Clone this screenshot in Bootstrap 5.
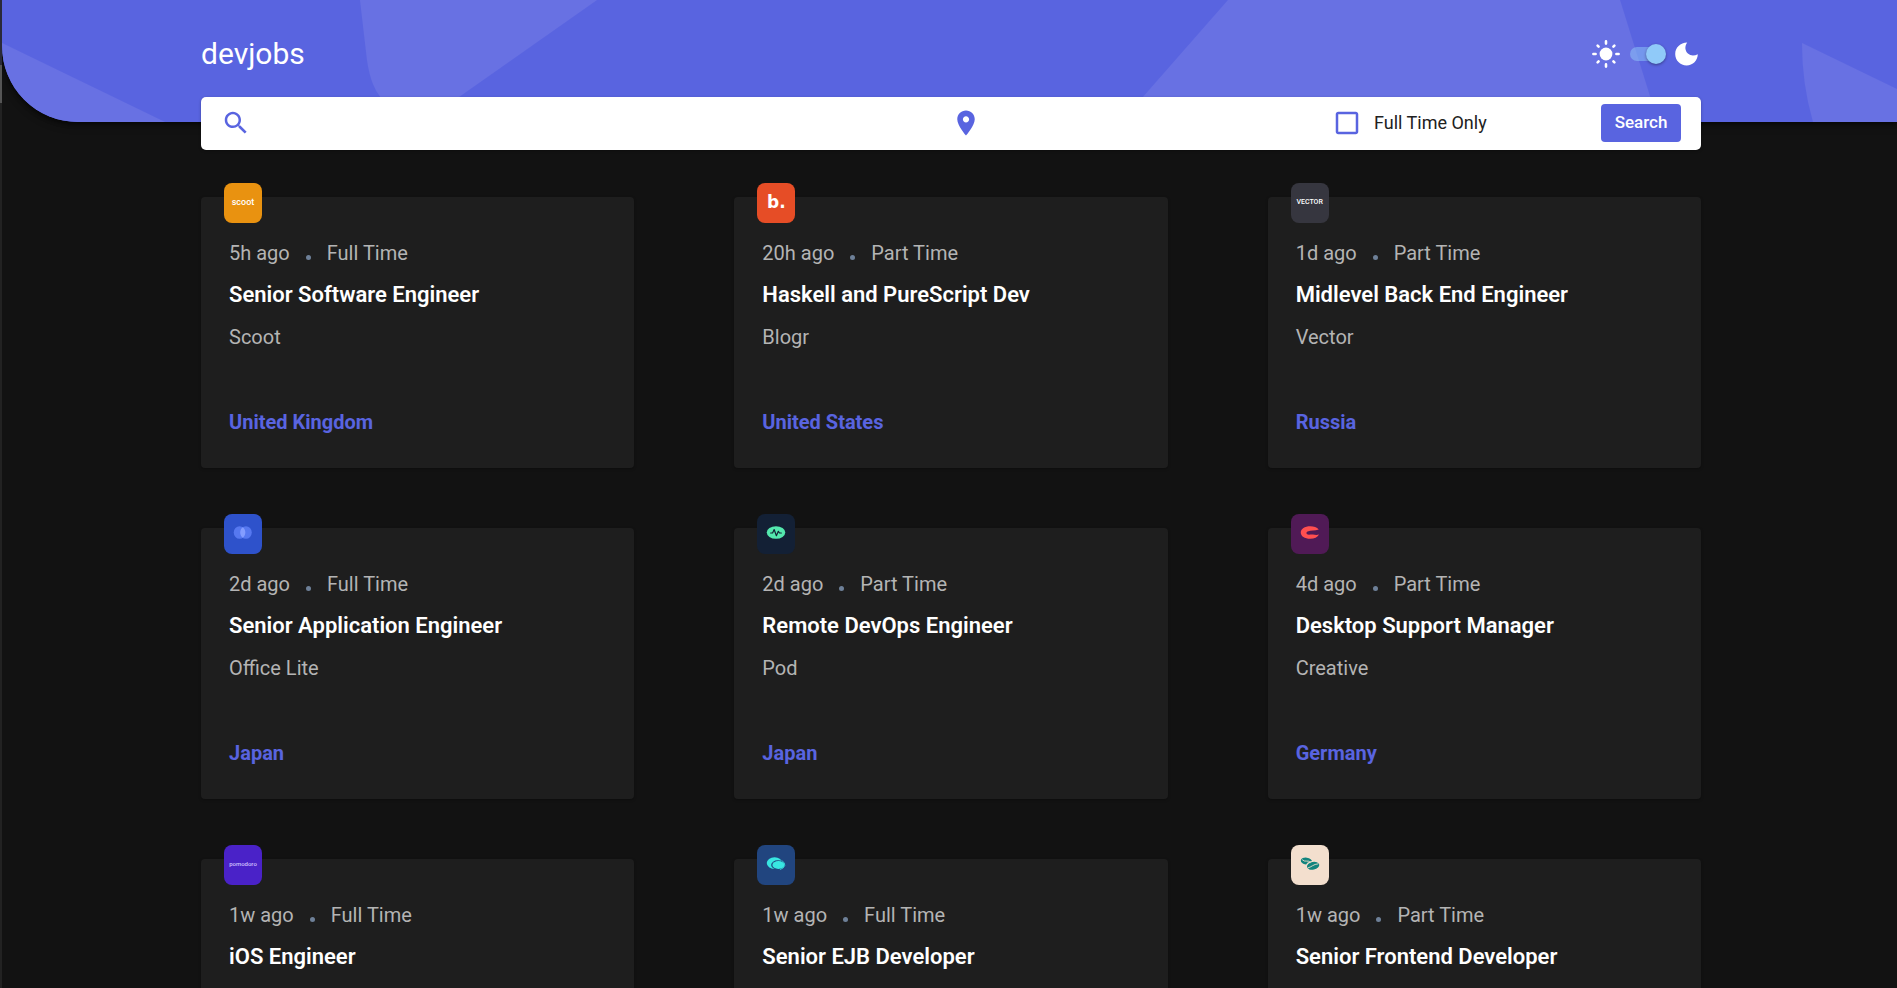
<!DOCTYPE html>
<html lang="en" data-bs-theme="dark">
<head>
<meta charset="utf-8">
<meta name="viewport" content="width=device-width, initial-scale=1">
<title>devjobs</title>
<link href="https://cdn.jsdelivr.net/npm/bootstrap@5.3.0/dist/css/bootstrap.min.css" rel="stylesheet">
<style>
  :root { --brand: #5964e0; --page: #121212; --panel: #1e1e1e; }
  body {
    font-family: Roboto, "Liberation Sans", sans-serif;
    padding-left: 2px;
    background: linear-gradient(#2a2a38 0 65px, #555 65px 103px, #222 103px);
  }
  .page-scroll { background: var(--page); scrollbar-width: none; }
  .page-scroll::-webkit-scrollbar { display: none; }
  .gutter { padding-left: 3px; }
  .wrap { max-width: 1500px; margin: 0 auto; }

  .hero {
    background: var(--brand);
    border-bottom-left-radius: 76px;
    padding-top: 36px;
    padding-bottom: 50px;
    overflow: hidden;
    box-shadow: 0 2px 4px rgba(0,0,0,.5), 0 4px 8px rgba(0,0,0,.3);
  }
  .hero-art { position: absolute; inset: 0; width: 100%; height: 100%; }
  .brand-name { font-size: 30px; line-height: 36px; color: #fff; text-decoration: none; }
  .theme-toggle { gap: 9px; padding-right: 3px; }
  .theme-switch {
    appearance: none; width: 36px; height: 20px; margin: 0; cursor: pointer; position: relative;
    background: none;
  }
  .theme-switch::before {
    content: ""; position: absolute; left: 0; right: 2px; top: 3px; height: 14px;
    border-radius: 7px; background: rgba(144,202,249,.5);
  }
  .theme-switch::after {
    content: ""; position: absolute; left: 0; top: 0; width: 20px; height: 20px;
    border-radius: 50%; background: #fafafa; box-shadow: 0 1px 3px rgba(0,0,0,.4);
  }
  .theme-switch:checked::after { left: auto; right: 0; background: #90caf9; }

  .search-bar {
    display: grid; grid-template-columns: 730fr 381fr 269fr auto; align-items: center;
    min-height: 53px; margin-top: -25px; padding: 0 20px 2px;
    background: #fff; border-radius: 5px; position: relative;
    box-shadow: 0 1px 3px rgba(0,0,0,.3);
  }
  .search-bar svg { color: var(--brand); }
  .plain-input { background: none; border: 0; outline: 0; color: #222; font-size: 18px; min-width: 0; }
  .tick {
    appearance: none; width: 30px; height: 30px; margin: 0; flex: none; cursor: pointer;
    background: url("data:image/svg+xml,%3Csvg xmlns='http://www.w3.org/2000/svg' viewBox='0 0 24 24'%3E%3Cpath fill='%235964e0' d='M19 5v14H5V5h14m0-2H5c-1.1 0-2 .9-2 2v14c0 1.1.9 2 2 2h14c1.1 0 2-.9 2-2V5c0-1.1-.9-2-2-2z'/%3E%3C/svg%3E") center / contain no-repeat;
  }
  .tick:checked { background-image: url("data:image/svg+xml,%3Csvg xmlns='http://www.w3.org/2000/svg' viewBox='0 0 24 24'%3E%3Cpath fill='%235964e0' d='M19 3H5a2 2 0 0 0-2 2v14c0 1.1.9 2 2 2h14a2 2 0 0 0 2-2V5a2 2 0 0 0-2-2zm-9 14-5-5 1.4-1.4 3.6 3.6 7.6-7.6L19 8z'/%3E%3C/svg%3E"); }
  .tick-label { gap: 12px; font-size: 18px; line-height: 24px; color: #212121; }
  .btn-search {
    --bs-btn-bg: var(--brand); --bs-btn-color: #fff; --bs-btn-hover-bg: #939bf4; --bs-btn-hover-color: #fff;
    width: 80px; height: 38px; padding: 0; font-size: 17px; font-weight: 500; border: 0; border-radius: 4px;
  }

  .job-grid { display: grid; grid-template-columns: repeat(3, 1fr); gap: 60px 100px; padding: 47px 0 60px; }
  .job {
    background: var(--panel); border: 0; border-radius: 4px; padding: 41px 28px 31px;
    font-size: 20px; line-height: 30px; color: #b4b4b4;
    box-shadow: 0 1px 3px rgba(0,0,0,.3);
  }
  .tile {
    position: absolute; top: -14px; left: 23px; width: 38px; height: 40px; border-radius: 8px;
    overflow: hidden; color: #fff;
    font: 500 9px/38px Roboto, sans-serif; text-align: center;
  }
  .tile svg { display: block; width: 38px; height: 40px; }
  .meta { gap: 16px; }
  .dot { width: 5px; height: 5px; border-radius: 50%; background: #6e8098; }
  .job-title { font-size: 22px; line-height: 30px; font-weight: 600; margin: 12px 0; }
  .job-title a { color: #fff; text-decoration: none; }
  .place { color: var(--brand); font-weight: 700; margin-top: 55px; }

  .t-scoot { background: #e99210; }
  .t-blogr { background: #e64d26; font: 700 17px/38px "DejaVu Sans", sans-serif; }
  .t-vector { background: #36363f; font-size: 7px; }
  .t-office { background: #2e52cb; }
  .t-pod { background: #132035; }
  .t-creative { background: #501a56; }
  .t-pomodoro { background: #4a22c8; color: #cfc0ff; font-size: 6px; }
  .t-maker { background: #21457f; }
  .t-coffee { background: #f3dfce; }

  @media (max-width: 1540px) { .wrap { margin: 0 24px; } .job-grid { column-gap: 40px; } }
  @media (max-width: 991px) { .job-grid { grid-template-columns: 1fr; } .search-bar { grid-template-columns: 1fr 1fr; } }
</style>
</head>
<body class="vh-100 overflow-hidden">
<div class="page-scroll h-100 overflow-auto">

  <header class="hero gutter position-relative">
    <svg class="hero-art" aria-hidden="true">
      <defs>
        <pattern id="shapes" width="1800" height="122" patternUnits="userSpaceOnUse">
          <g fill="#6871e3">
            <path d="M0 43 L163 122 H11 Q0 84 0 43Z"/>
            <path d="M358 0 H595 L457 97 L420 122 Q382 112 371 84 Q367 74 365 60Z"/>
            <path d="M1226 0 H1618 L1656 122 H1119Z"/>
          </g>
        </pattern>
      </defs>
      <rect width="100%" height="100%" fill="url(#shapes)"/>
    </svg>
    <div class="wrap d-flex justify-content-between align-items-center position-relative">
      <a class="brand-name" href="#">devjobs</a>
      <div class="theme-toggle d-flex align-items-center">
        <svg width="30" height="30" viewBox="0 0 30 30" fill="none" stroke="#fff" stroke-width="2.600" stroke-linecap="round" aria-hidden="true">
          <circle cx="15" cy="15" r="6.400" fill="#fff" stroke="none"/>
          <path d="M15 2.400v2.200M15 25.400v2.200M2.400 15h2.200M25.400 15h2.200M6.600 6.600l1 1M22.400 22.400l1 1M6.600 23.400l1-1M22.400 7.600l1-1"/>
        </svg>
        <input class="theme-switch" type="checkbox" role="switch" aria-label="Dark theme" checked>
        <svg width="23" height="24" viewBox="0 0 23 24" fill="#fff" aria-hidden="true">
          <path d="M12.200 .6C9.400 4.300 10 9 12.900 11.600C15.600 14 19.500 13.900 22.800 12.200C22.700 18.400 17.900 23.400 11.600 23.400C5.200 23.400 .2 18.400 .2 12C.2 5.700 5.300 .8 12.200 .6Z"/>
        </svg>
      </div>
    </div>
  </header>

  <div class="gutter">
    <div class="wrap">
      <form class="search-bar" onsubmit="return false">
        <label class="d-flex align-items-center">
          <svg width="30" height="30" viewBox="0 0 24 24" fill="currentColor" aria-hidden="true"><path d="M15.500 14h-.79l-.28-.27C15.410 12.590 16 11.110 16 9.500 16 5.910 13.090 3 9.500 3S3 5.910 3 9.500 5.910 16 9.500 16c1.610 0 3.090-.59 4.230-1.570l.27.28v.79l5 4.990L20.490 19l-4.990-5zm-6 0C7.010 14 5 11.990 5 9.500S7.010 5 9.500 5 14 7.010 14 9.500 11.990 14 9.500 14z"/></svg>
          <input class="plain-input flex-grow-1 ms-2" type="text" aria-label="Title, company or expertise">
        </label>
        <label class="d-flex align-items-center">
          <svg width="30" height="30" viewBox="0 0 24 24" fill="currentColor" aria-hidden="true"><path d="M12 2C8.130 2 5 5.130 5 9c0 5.250 7 13 7 13s7-7.750 7-13c0-3.870-3.130-7-7-7zm0 9.500c-1.380 0-2.500-1.120-2.500-2.500s1.120-2.500 2.500-2.500 2.500 1.120 2.500 2.500-1.120 2.500-2.500 2.500z"/></svg>
          <input class="plain-input flex-grow-1 ms-2" type="text" aria-label="Location">
        </label>
        <label class="tick-label d-flex align-items-center">
          <input class="tick" type="checkbox">
          <span>Full Time Only</span>
        </label>
        <button class="btn btn-search" type="submit">Search</button>
      </form>

      <main class="job-grid">
        <article class="card job">
          <div class="tile t-scoot">scoot</div>
          <div class="meta d-flex align-items-baseline"><span>5h ago</span><span class="dot"></span><span>Full Time</span></div>
          <h2 class="job-title"><a href="#">Senior Software Engineer</a></h2>
          <div>Scoot</div>
          <div class="place">United Kingdom</div>
        </article>
        <article class="card job">
          <div class="tile t-blogr">b.</div>
          <div class="meta d-flex align-items-baseline"><span>20h ago</span><span class="dot"></span><span>Part Time</span></div>
          <h2 class="job-title"><a href="#">Haskell and PureScript Dev</a></h2>
          <div>Blogr</div>
          <div class="place">United States</div>
        </article>
        <article class="card job">
          <div class="tile t-vector">VECTOR</div>
          <div class="meta d-flex align-items-baseline"><span>1d ago</span><span class="dot"></span><span>Part Time</span></div>
          <h2 class="job-title"><a href="#">Midlevel Back End Engineer</a></h2>
          <div>Vector</div>
          <div class="place">Russia</div>
        </article>
        <article class="card job">
          <div class="tile t-office">
            <svg viewBox="0 0 39 40" aria-hidden="true"><ellipse cx="16" cy="18.500" rx="6" ry="6.500" fill="#5678f0"/><ellipse cx="22.500" cy="18.500" rx="6" ry="6.500" fill="#5678f0"/><path d="M19.250 13.100a6 6.500 0 0 1 0 10.800a6 6.500 0 0 1 0-10.800z" fill="#839dff"/></svg>
          </div>
          <div class="meta d-flex align-items-baseline"><span>2d ago</span><span class="dot"></span><span>Full Time</span></div>
          <h2 class="job-title"><a href="#">Senior Application Engineer</a></h2>
          <div>Office Lite</div>
          <div class="place">Japan</div>
        </article>
        <article class="card job">
          <div class="tile t-pod">
            <svg viewBox="0 0 39 40" aria-hidden="true"><ellipse cx="19.500" cy="18.500" rx="9.500" ry="6.500" fill="#54e8ae"/><path d="M14 19h2l1.600-3.600 2.300 6.400 2-4.600 1.200 1.800h1.900" fill="none" stroke="#132035" stroke-width="1.200" stroke-linejoin="round" stroke-linecap="round"/></svg>
          </div>
          <div class="meta d-flex align-items-baseline"><span>2d ago</span><span class="dot"></span><span>Part Time</span></div>
          <h2 class="job-title"><a href="#">Remote DevOps Engineer</a></h2>
          <div>Pod</div>
          <div class="place">Japan</div>
        </article>
        <article class="card job">
          <div class="tile t-creative">
            <svg viewBox="0 0 39 40" aria-hidden="true"><path d="M28.500 15.500C26.500 13 23.500 12 19.800 12C14 12 10 14.700 10 18.500S14 25 19.800 25C24 25 27.300 23.500 28.800 20.600C26.500 21.300 24.500 20.900 22.500 20.600C20.600 20.300 18 21.200 16.500 20.300C15.400 19.500 15.800 18 17 17.500C20.500 16.200 24.500 17.200 28.500 15.500Z" fill="#ff4f50"/></svg>
          </div>
          <div class="meta d-flex align-items-baseline"><span>4d ago</span><span class="dot"></span><span>Part Time</span></div>
          <h2 class="job-title"><a href="#">Desktop Support Manager</a></h2>
          <div>Creative</div>
          <div class="place">Germany</div>
        </article>
        <article class="card job">
          <div class="tile t-pomodoro">pomodoro</div>
          <div class="meta d-flex align-items-baseline"><span>1w ago</span><span class="dot"></span><span>Full Time</span></div>
          <h2 class="job-title"><a href="#">iOS Engineer</a></h2>
          <div>Pomodoro</div>
          <div class="place">United Kingdom</div>
        </article>
        <article class="card job">
          <div class="tile t-maker">
            <svg viewBox="0 0 39 40" aria-hidden="true"><ellipse cx="18" cy="18" rx="8" ry="6" fill="#38e6e2"/><ellipse cx="21.500" cy="20" rx="7" ry="4.800" fill="#21457f"/><ellipse cx="22" cy="20" rx="6.200" ry="4" fill="#38e6e2"/><path d="M25.500 15.500q3.500 2 3 5q-.8 3-5 4.200" fill="none" stroke="#38e6e2" stroke-width=".8"/></svg>
          </div>
          <div class="meta d-flex align-items-baseline"><span>1w ago</span><span class="dot"></span><span>Full Time</span></div>
          <h2 class="job-title"><a href="#">Senior EJB Developer</a></h2>
          <div>Maker</div>
          <div class="place">United States</div>
        </article>
        <article class="card job">
          <div class="tile t-coffee">
            <svg viewBox="0 0 39 40" aria-hidden="true"><g fill="#12857e"><ellipse cx="15.800" cy="16" rx="5.800" ry="3.600" transform="rotate(8 15.800 16)"/><ellipse cx="22.500" cy="20.800" rx="7.200" ry="4.800" fill="#f3dfce"/><ellipse cx="22.700" cy="20.800" rx="6.400" ry="4" transform="rotate(-12 22.700 20.800)"/></g><path d="M11.500 14.500q2 2 4.500 1.500t4 1.500M17.500 22.800q2-.3 4.500-2t6-2" fill="none" stroke="#f3dfce" stroke-width=".9"/></svg>
          </div>
          <div class="meta d-flex align-items-baseline"><span>1w ago</span><span class="dot"></span><span>Part Time</span></div>
          <h2 class="job-title"><a href="#">Senior Frontend Developer</a></h2>
          <div>Coffeeroasters</div>
          <div class="place">Singapore</div>
        </article>
      </main>
    </div>
  </div>
</div>
<script src="https://cdn.jsdelivr.net/npm/bootstrap@5.3.0/dist/js/bootstrap.bundle.min.js"></script>
</body>
</html>
